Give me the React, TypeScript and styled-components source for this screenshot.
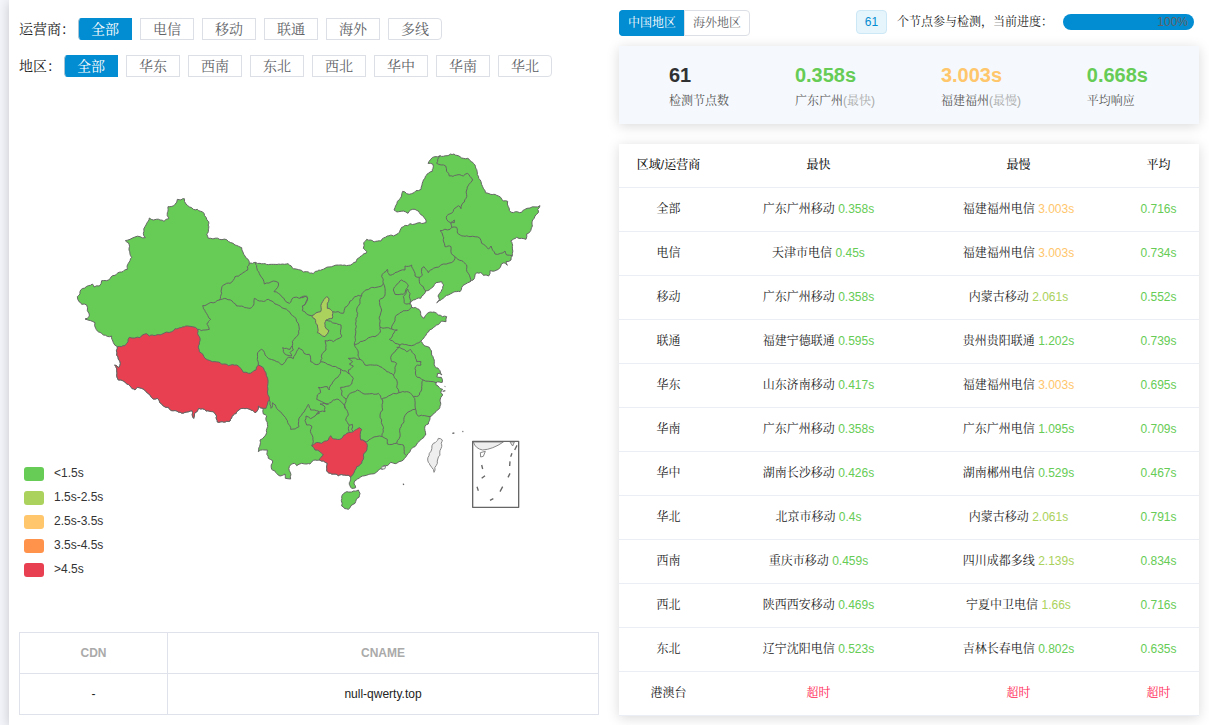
import React from "react";
import styled, { createGlobalStyle } from "styled-components";

const GREEN = "#66cc55";
const LIME = "#abd25c";
const YELLOW = "#ffc66b";
const ORANGE = "#ff934c";
const RED = "#e84050";
const BLUE = "#028cd1";

const GlobalStyle = createGlobalStyle`
  *, *::before, *::after { box-sizing: border-box; }
  body {
    margin: 0;
    background: #f5f6fb;
    color: #222;
    font-family: "Liberation Sans", "Noto Serif CJK SC", "Noto Sans CJK SC", sans-serif;
    font-size: 12px;
    line-height: 18px;
  }
  button { font-family: inherit; cursor: pointer; }
`;

const Page = styled.div`
  padding-left: 9px;
  overflow: hidden;
`;

const Panel = styled.main`
  display: grid;
  grid-template-columns: 1fr 1fr;
  gap: 20px;
  min-height: 100vh;
  padding: 10px 10px 9px;
  background: #fff;
  box-shadow: 0 2px 12px rgba(0, 0, 0, 0.2);
`;

const Column = styled.section`
  display: flex;
  flex-direction: column;
  min-width: 0;
`;

const FilterRow = styled.div`
  display: flex;
  align-items: center;
  gap: 3px;
  height: 22px;
  margin: 8px 0 7px;
  font-size: 14px;
  color: #222;
`;

const Filters = styled.div`
  display: flex;
  gap: 8px;
`;

const FilterButton = styled.button<{ $active?: boolean }>`
  width: 54px;
  height: 22px;
  padding: 0;
  border: 1px solid ${(p) => (p.$active ? BLUE : "#dcdfe6")};
  border-left-color: ${(p) => (p.$active ? "#a9c4d4" : "#dcdfe6")};
  background: ${(p) => (p.$active ? BLUE : "#fff")};
  color: ${(p) => (p.$active ? "#fff" : "#606266")};
  font-size: 14px;
  line-height: 20px;

  &:first-child { border-radius: 4px 0 0 4px; }
  &:last-child { border-radius: 0 4px 4px 0; }
`;

const MapArea = styled.div`
  display: grid;
  margin-top: 6px;
`;

const MapDrawing = styled.svg`
  grid-area: 1 / 1;
  display: block;
  width: 100%;
`;

const Legend = styled.ul`
  grid-area: 1 / 1;
  align-self: end;
  justify-self: start;
  margin: 0 0 38px;
  padding: 0 0 0 5px;
  list-style: none;
`;

const LegendItem = styled.li`
  display: flex;
  align-items: center;
  gap: 10px;
  height: 24px;
  color: #333;
`;

const LegendText = styled.span`
  padding-bottom: 2px;
`;

const Swatch = styled.span<{ $color: string }>`
  width: 20px;
  height: 14px;
  border-radius: 3px;
  background: ${(p) => p.$color};
`;

const CdnTable = styled.table`
  width: 100%;
  margin-top: 12px;
  border-collapse: collapse;
  table-layout: fixed;
  text-align: center;

  th, td {
    height: 41px;
    padding: 0;
    border: 1px solid #dfe2ea;
  }
  th { color: #aaa; font-weight: bold; }
  th:first-child { width: 148px; }
`;

const StatusBar = styled.div`
  display: flex;
  align-items: flex-start;
  justify-content: space-between;
  height: 36px;
`;

const TabButton = styled.button<{ $active?: boolean }>`
  height: 26px;
  padding: 0 8px;
  border: 1px solid ${(p) => (p.$active ? BLUE : "#dcdfe6")};
  background: ${(p) => (p.$active ? BLUE : "#fff")};
  color: ${(p) => (p.$active ? "#fff" : "#606266")};
  font-size: 12px;
  line-height: 22px;

  &:first-child { border-right: 0; border-radius: 4px 0 0 4px; }
  &:last-child { border-radius: 0 4px 4px 0; }
`;

const Tabs = styled.div`
  display: flex;
`;

const Progress = styled.div`
  display: flex;
  align-items: center;
  gap: 10px;
  height: 24px;
  padding-right: 5px;
`;

const CountTag = styled.span`
  width: 31px;
  height: 24px;
  border: 1px solid #cce8f6;
  border-radius: 4px;
  background: #e6f4fb;
  color: ${BLUE};
  line-height: 22px;
  text-align: center;
`;

const ProgressBar = styled.div`
  width: 131px;
  height: 16px;
  padding-right: 6px;
  border-radius: 8px;
  background: ${BLUE};
  color: #606266;
  line-height: 17px;
  text-align: right;
`;

const Summary = styled.div`
  display: flex;
  justify-content: space-between;
  height: 78px;
  padding: 17px 51px 0 50px;
  background: #f5f9fd;
  box-shadow: 0 2px 12px rgba(0, 0, 0, 0.15);
`;

const Stat = styled.div`
  display: flex;
  flex-direction: column;
  gap: 5px;
  color: #555;
`;

const StatValue = styled.strong<{ $color: string }>`
  color: ${(p) => p.$color};
  font-size: 20px;
  line-height: 24px;
`;

const Muted = styled.span`
  color: #aaa;
`;

const ResultTable = styled.table`
  width: 100%;
  margin-top: 20px;
  border-collapse: separate;
  border-spacing: 0;
  table-layout: fixed;
  background: #fff;
  box-shadow: 0 2px 12px rgba(0, 0, 0, 0.15);
  text-align: center;

  th, td {
    height: 44px;
    padding: 0 1px 1px 0;
    border-bottom: 1px solid #ebeef5;
  }
  th { color: #111; font-weight: 500; }
  th:nth-child(1) { width: 17.24%; }
  th:nth-child(2), th:nth-child(3) { width: 34.48%; }
  th:nth-child(4) { width: 13.8%; }
`;

const Time = styled.span<{ $color: string }>`
  color: ${(p) => p.$color};
`;

/* ---- map geometry ---- */

type Point = [number, number];

const parse = (s: string): Point[] =>
  s.trim().split(/\s+/).map((pair) => pair.split(",").map(Number) as Point);

// Splits a segment into short wobbling pieces. The wobble depends only on the
// midpoint, so a border shared by two provinces comes out the same for both.
const roughen = (a: Point, b: Point): Point[] => {
  const dx = b[0] - a[0];
  const dy = b[1] - a[1];
  const length = Math.hypot(dx, dy);
  if (length < 9) return [b];
  const mx = (a[0] + b[0]) / 2;
  const my = (a[1] + b[1]) / 2;
  const wobble = Math.sin(mx * 12.9898 + my * 78.233) * Math.min(length * 0.13, 3);
  const flip = dx > 0 || (dx === 0 && dy > 0) ? 1 : -1;
  const mid: Point = [mx - (dy / length) * wobble * flip, my + (dx / length) * wobble * flip];
  return [...roughen(a, mid), ...roughen(mid, b)];
};

const trace = (s: string, closed = false): string => {
  const points = parse(s);
  if (closed) points.push(points[0]);
  let d = `M${points[0][0]} ${points[0][1]}`;
  for (let i = 1; i < points.length; i++) {
    for (const p of roughen(points[i - 1], points[i])) {
      d += `L${p[0].toFixed(1)} ${p[1].toFixed(1)}`;
    }
  }
  return d + (closed ? "Z" : "");
};

const MAINLAND = `568,370 586,367 600,370 640,373 684,371 694,378 700,386 716,389 730,396 740,395 760,401
795,385 820,378 865,376 888,366 900,350 918,340 920,335 910,325 911,308 920,298 932,300 942,306 963,303
982,288 1000,288 1015,280 1025,262 1042,257 1050,251 1080,248 1098,248 1098,240 1088,227 1075,213 1065,208
1052,210 1044,220 1030,213 1010,216 1002,210 1005,203 1016,180 1028,154 1040,161 1055,161 1068,152 1083,148
1086,135 1095,115 1105,100 1117,94 1119,85 1118,72 1104,70 1112,58 1125,50 1140,47 1182,42 1200,50 1223,55
1238,67 1247,84 1252,104 1263,125 1268,140 1276,158 1292,163 1310,166 1322,172 1330,183 1343,184 1345,200
1348,212 1360,218 1385,217 1393,209 1410,204 1440,197 1433,208 1435,218 1425,228 1418,240 1417,258 1410,275
1400,282 1398,298 1385,295 1370,292 1352,303 1357,320 1357,347 1353,360 1338,365 1342,376 1332,368 1324,372
1320,383 1308,391 1290,392 1286,408 1270,406 1262,398 1250,398 1244,412 1231,425 1215,433 1200,455 1180,457
1165,465 1145,478 1130,488 1138,478 1134,468 1143,455 1151,435 1145,425 1128,428 1120,440 1097,453 1092,463
1082,475 1060,480 1050,490 1055,502 1077,508 1082,525 1092,535 1102,520 1122,516 1135,525 1160,530 1158,545
1145,543 1130,555 1120,563 1100,580 1088,598 1082,604 1095,618 1108,622 1115,645 1123,665 1125,680 1140,692
1146,705 1132,700 1130,710 1144,712 1147,727 1128,728 1128,735 1138,743 1148,748 1142,758 1148,765 1140,780
1140,798 1128,815 1110,830 1105,852 1095,858 1097,885 1082,900 1065,920 1050,935 1040,947 1025,963 1010,970
992,967 982,977 970,977 968,988 960,986 950,996 935,1002 915,1007 900,1012 885,1022 882,1032 887,1043
875,1045 868,1028 872,1010 855,1005 835,1007 815,1002 800,992 802,970 778,960 765,960 750,972 740,972
725,970 710,977 703,970 688,980 688,992 692,1017 676,1015 675,1002 660,1008 650,1000 635,988 638,962
625,955 622,930 595,935 600,915 600,900 620,878 620,828 610,822 610,805 595,798 592,812 585,818 570,808
550,805 520,825 510,843 472,846 470,828 460,815 438,813 416,805 404,820 401,835 396,812 375,817 335,812
325,802 310,798 292,775 280,777 270,765 245,745 232,742 225,750 210,738 190,723 175,720 170,692 164,675
175,683 181,670 170,645 172,620 160,608 155,588 130,585 120,577 107,565 105,548 92,542 75,537 87,530 82,512
80,495 65,493 57,485 52,470 60,462 62,450 85,437 97,432 102,441 118,438 125,422 145,420 165,406 185,396
202,388 205,370 215,352 207,330 205,308 196,302 210,298 240,290 256,293 250,280 258,255 268,234 280,240
300,240 312,244 326,236 324,200 345,193 352,178 373,176 378,192 400,208 412,208 432,220 446,245 446,265
440,282 445,295 500,299 525,315 545,323 555,348`;

const TIBET = `172,620 195,617 208,592 240,593 260,581 268,588 305,583 335,575 345,566 382,558 413,568 418,590
418,635 435,655 465,665 505,677 530,675 542,685 550,697 565,700 588,690 595,675 610,683 623,715 628,780
618,805 610,805 595,798 592,812 585,818 570,808 550,805 520,825 510,843 472,846 470,828 460,815 438,813
416,805 404,820 401,835 396,812 375,817 335,812 325,802 310,798 292,775 280,777 270,765 245,745 232,742
225,750 210,738 190,723 175,720 170,692 164,675 175,683 181,670 170,645`;

const GUANGXI = `755,917 765,910 785,910 805,900 812,887 820,897 845,895 860,880 880,875 898,863 905,868
902,900 920,910 918,935 910,945 905,970 890,980 885,990 872,1010 855,1005 835,1007 815,1002 800,992
802,970 778,960 790,945 780,935 765,930`;

const NINGXIA = `755,527 782,515 785,490 792,478 800,470 807,477 802,490 802,505 818,515 817,535 798,540
795,560 807,572 795,590 788,588 772,578 772,555 765,537`;

const HAINAN = `845,1070 860,1055 880,1053 895,1050 900,1060 897,1072 885,1090 865,1108 845,1098 844,1082`;

const TAIWAN = `1135,895 1147,900 1145,920 1132,970 1122,997 1115,982 1105,967 1108,940 1120,910`;

const BORDERS = [
  "568,370 562,380 563,390 545,402 525,410 510,430 490,435 485,460 478,480",
  "478,480 428,497 436,515 452,538 440,552 448,568 435,570 413,568",
  "628,780 633,805 638,788 650,805 672,828 692,868 717,860 720,830 735,810 745,793 752,810 775,813 778,820 765,828",
  "765,828 752,836 738,828 735,842 740,855 755,858 753,880 760,905 755,917",
  "765,828 780,815 795,815 795,802 780,792 805,792 820,780 838,780 850,792 855,805 865,825 857,840 868,855 867,875",
  "868,855 877,853 875,868 880,875",
  "805,792 785,785 770,778 772,765 782,758 775,742 802,740 808,750 828,715 842,695 842,687 860,695 868,702 880,715 875,732 842,742 845,765 858,778 856,805",
  "595,675 592,642 605,628 620,650 650,665 665,675 678,660 685,652 700,656 705,645 717,623 732,640 748,643 752,665 775,673 782,665",
  "697,617 690,628 668,623 670,635 680,645 695,648 690,638 700,630 697,617",
  "782,665 810,675 842,687",
  "478,480 498,476 520,488 530,498 550,500 570,505 582,490 583,475 605,483 625,478 645,492 665,503 690,517 708,535 718,568 710,590 697,605 697,617",
  "586,367 600,405 613,432 640,423 655,428 653,442 642,455 665,470 688,490 700,473 720,475 735,468 743,475 740,485 727,498 727,512 755,527",
  "720,472 740,468 742,480 728,498",
  "818,515 850,520 855,502 870,483 885,470 905,467",
  "798,540 825,550 843,555 845,590 830,598 820,605 795,602 798,630 785,645 782,665",
  "905,467 900,490 890,510 892,530 886,568 883,613 895,640 900,658",
  "900,658 865,655 878,665 868,672 880,678 865,690 868,702",
  "905,467 908,458 930,445 965,438 970,430 975,445 975,465 958,480 965,510 960,545 960,562 958,580 945,590 920,598 883,613",
  "970,430 965,410 982,388 988,405 1005,398 1020,392 1035,390 1035,378 1055,375 1063,395 1065,408 1078,412 1087,405 1085,385 1092,380 1105,398 1120,385 1150,372 1182,362 1185,350",
  "1078,412 1078,425 1090,440 1097,453",
  "1185,350 1205,362 1220,375 1225,400 1231,425",
  "1185,350 1178,345 1173,320 1155,320 1148,285 1140,272 1170,268 1175,262 1190,262 1193,280 1210,288 1230,290 1260,295 1265,310 1285,327 1293,318 1305,342 1335,333 1340,345 1357,347",
  "1140,47 1130,70 1157,78 1168,108 1210,108 1222,100 1238,120 1220,150 1218,175 1205,195 1203,206 1195,197 1160,228 1160,238 1172,248 1183,240 1183,248 1172,250 1175,262",
  "1025,420 1045,435 1038,448 1030,463 1005,463 1000,450 1010,433 1025,420",
  "1043,447 1038,460 1030,470 1032,488 1050,492 1048,470 1050,460 1043,447",
  "1055,502 1040,512 1020,518 1005,535 995,560 995,567 1012,570 988,598 1005,610 1020,615",
  "960,562 995,567",
  "1020,615 1055,617 1070,610 1082,604",
  "1020,615 1008,630 992,652 995,665 1010,670 1005,695 1000,705 1010,720 1010,742 1017,758",
  "900,658 915,675 960,680 980,695 1000,705",
  "858,778 865,765 892,750 920,762 955,760 965,778 985,768 1017,758 1040,755 1060,770 1065,795 1067,808 1075,828 1110,830",
  "967,778 968,810 960,825 967,855 967,890",
  "1060,770 1078,765 1085,740 1090,720 1120,725 1128,728",
  "1010,622 1040,635 1050,628 1065,645 1070,665 1083,665 1083,675 1072,675 1065,685 1072,712 1090,720",
  "1067,808 1038,822 1032,845 1020,865 1020,880 1010,910",
  "902,900 920,905 935,895 967,890 982,898 982,912 1010,910 1030,915 1032,940 1040,947",
];

const SEA_DASHES =
  "M1265 975l3 12M1265 1015l10-8M1251 1040l4 12M1290 1081l10-5M1320 1055l8-15M1344 1012l6-12M1349 978l1-14M1352 950l4-10M1364 930l7-14";

const ChinaMap = () => (
  <MapDrawing viewBox="-123 -150 1740 1590" role="img" aria-label="中国地区响应时间">
    <g stroke="#666" strokeWidth="3" strokeLinejoin="round" fill="none">
      <path d={trace(MAINLAND, true)} fill={GREEN} />
      {BORDERS.map((line) => (
        <path key={line} d={trace(line)} />
      ))}
      <path d={trace(TIBET, true)} fill={RED} />
      <path d={trace(GUANGXI, true)} fill={RED} />
      <path d={trace(NINGXIA, true)} fill={LIME} />
      <path d={trace(HAINAN, true)} fill={GREEN} />
      <path d={trace(TAIWAN, true)} fill="#eee" stroke="#888" />
      <path d="M1177 880l6-1M1207 874l3 1M1030 1031l1 4M1148 754l8-2M1154 740l2-1" strokeWidth="4" />
      <path d="M965 980l12-2-2 8-9 2z" fill="#eee" stroke="#888" />
      <path d="M1240 906q6 20 28 24q30-2 62-24zM1350 906l8 12 5-12z" fill="#eee" stroke="#888" />
      <path d="M1261 938l15-4-6 15-8 2z" fill="#fff" stroke="#888" />
      <path d={SEA_DASHES} strokeWidth="4" />
      <rect x="1238" y="904" width="138" height="198" strokeWidth="4" />
    </g>
  </MapDrawing>
);

/* ---- data ---- */

const CARRIERS = ["全部", "电信", "移动", "联通", "海外", "多线"];
const AREAS = ["全部", "华东", "西南", "东北", "西北", "华中", "华南", "华北"];

const LEGEND: [string, string][] = [
  [GREEN, "<1.5s"],
  [LIME, "1.5s-2.5s"],
  [YELLOW, "2.5s-3.5s"],
  [ORANGE, "3.5s-4.5s"],
  [RED, ">4.5s"],
];

const ROWS: [string, string, string, string, string, string][] = [
  ["全部", "广东广州移动", "0.358s", "福建福州电信", "3.003s", "0.716s"],
  ["电信", "天津市电信", "0.45s", "福建福州电信", "3.003s", "0.734s"],
  ["移动", "广东广州移动", "0.358s", "内蒙古移动", "2.061s", "0.552s"],
  ["联通", "福建宁德联通", "0.595s", "贵州贵阳联通", "1.202s", "0.739s"],
  ["华东", "山东济南移动", "0.417s", "福建福州电信", "3.003s", "0.695s"],
  ["华南", "广东广州移动", "0.358s", "广东广州电信", "1.095s", "0.709s"],
  ["华中", "湖南长沙移动", "0.426s", "湖南郴州电信", "0.529s", "0.467s"],
  ["华北", "北京市移动", "0.4s", "内蒙古移动", "2.061s", "0.791s"],
  ["西南", "重庆市移动", "0.459s", "四川成都多线", "2.139s", "0.834s"],
  ["西北", "陕西西安移动", "0.469s", "宁夏中卫电信", "1.66s", "0.716s"],
  ["东北", "辽宁沈阳电信", "0.523s", "吉林长春电信", "0.802s", "0.635s"],
  ["港澳台", "", "超时", "", "超时", "超时"],
];

const timeColor = (value: string) => {
  const seconds = parseFloat(value);
  if (Number.isNaN(seconds)) return "#ff2855";
  if (seconds < 1.5) return GREEN;
  if (seconds < 2.5) return LIME;
  if (seconds < 3.5) return YELLOW;
  return seconds < 4.5 ? ORANGE : RED;
};

const Duration = ({ value }: { value: string }) => <Time $color={timeColor(value)}>{value}</Time>;

const FilterGroup = ({ label, options }: { label: string; options: string[] }) => (
  <FilterRow role="group" aria-label={label}>
    <span>{label}：</span>
    <Filters>
      {options.map((option, i) => (
        <FilterButton key={option} type="button" $active={i === 0}>
          {option}
        </FilterButton>
      ))}
    </Filters>
  </FilterRow>
);

export default function App() {
  return (
    <>
      <GlobalStyle />
      <Page>
        <Panel>
          <Column>
            <FilterGroup label="运营商" options={CARRIERS} />
            <FilterGroup label="地区" options={AREAS} />
            <MapArea>
              <ChinaMap />
              <Legend>
                {LEGEND.map(([color, text]) => (
                  <LegendItem key={text}>
                    <Swatch $color={color} />
                    <LegendText>{text}</LegendText>
                  </LegendItem>
                ))}
              </Legend>
            </MapArea>
            <CdnTable>
              <thead>
                <tr>
                  <th>CDN</th>
                  <th>CNAME</th>
                </tr>
              </thead>
              <tbody>
                <tr>
                  <td>-</td>
                  <td>null-qwerty.top</td>
                </tr>
              </tbody>
            </CdnTable>
          </Column>

          <Column>
            <StatusBar>
              <Tabs>
                <TabButton type="button" $active>中国地区</TabButton>
                <TabButton type="button">海外地区</TabButton>
              </Tabs>
              <Progress>
                <CountTag>61</CountTag>
                <span>个节点参与检测，当前进度：</span>
                <ProgressBar role="progressbar" aria-valuenow={100} aria-label="当前进度">100%</ProgressBar>
              </Progress>
            </StatusBar>

            <Summary>
              <Stat>
                <StatValue $color="#303133">61</StatValue>
                <span>检测节点数</span>
              </Stat>
              <Stat>
                <StatValue $color={GREEN}>0.358s</StatValue>
                <span>广东广州<Muted>(最快)</Muted></span>
              </Stat>
              <Stat>
                <StatValue $color={YELLOW}>3.003s</StatValue>
                <span>福建福州<Muted>(最慢)</Muted></span>
              </Stat>
              <Stat>
                <StatValue $color={GREEN}>0.668s</StatValue>
                <span>平均响应</span>
              </Stat>
            </Summary>

            <ResultTable>
              <thead>
                <tr>
                  <th>区域/运营商</th>
                  <th>最快</th>
                  <th>最慢</th>
                  <th>平均</th>
                </tr>
              </thead>
              <tbody>
                {ROWS.map(([name, fastNode, fast, slowNode, slow, average]) => (
                  <tr key={name}>
                    <td>{name}</td>
                    <td>{fastNode} <Duration value={fast} /></td>
                    <td>{slowNode} <Duration value={slow} /></td>
                    <td><Duration value={average} /></td>
                  </tr>
                ))}
              </tbody>
            </ResultTable>
          </Column>
        </Panel>
      </Page>
    </>
  );
}
